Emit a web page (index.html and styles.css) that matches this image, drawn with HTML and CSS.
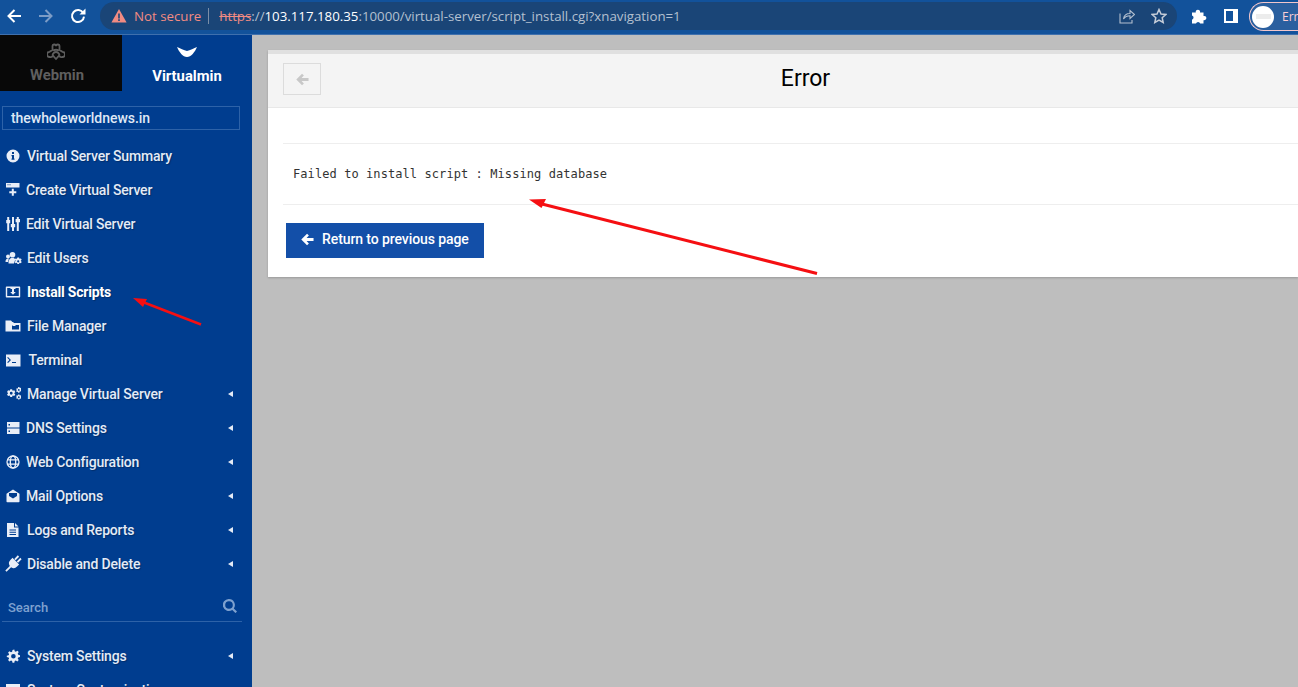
FILE: index.html
```html
<!DOCTYPE html>
<html lang="en">
<head>
<meta charset="utf-8">
<title>Error</title>
<link rel="stylesheet" href="styles.css">
</head>
<body>
<div class="page">
  <header class="chrome">
    <div class="nav-buttons">
      <svg class="nav" viewBox="0 0 16 16"><path d="M15 8H2.500M8.500 2L2.500 8l6 6" fill="none" stroke="#fff" stroke-width="2"/></svg>
      <svg class="nav" viewBox="0 0 16 16"><path d="M1 8h12.500M7.500 2l6 6-6 6" fill="none" stroke="#7c9cc6" stroke-width="2"/></svg>
      <svg class="nav" viewBox="0 0 16 16"><path d="M13.300 5.200A6 6 0 1 0 14 8.600" fill="none" stroke="#fff" stroke-width="2"/><path d="M9.500 6.500h6V.6z" fill="#fff"/></svg>
    </div>
    <div class="omnibox">
      <svg class="warn" viewBox="0 0 16 16"><path d="M8 1l7.600 13.500H.4z" fill="#f28b82"/><path d="M7.200 5.500h1.600v5H7.200zM7.200 11.300h1.600v1.600H7.200z" fill="#1a4577"/></svg>
      <span class="not-secure">Not secure</span>
      <span class="divider"></span>
      <span class="url"><s class="scheme">https</s><span class="dim">://</span><span class="host">103.117.180.35</span><span class="dim">:10000/virtual-server/script_install.cgi?xnavigation=1</span></span>
      <svg class="omni-icon share" viewBox="0 0 16 16"><path d="M1 5.500v9.500h12v-3M4.500 11C5 7.500 7.500 5.500 11 5.500V2.500L15.500 6.500 11 10.500V7.800C8.500 7.800 6 8.800 4.500 11z" fill="none" stroke="#b4c0d0" stroke-width="1.100"/></svg>
      <svg class="omni-icon star" viewBox="0 0 16 16"><path d="M8 1.500l2 4.500 4.800.5-3.600 3.200 1 4.800L8 12.100l-4.200 2.400 1-4.800L1.200 6.500 6 6z" fill="none" stroke="#c6cdd8" stroke-width="1.500"/></svg>
    </div>
    <svg class="ext" viewBox="0 0 16 16"><path d="M1 4.500h3.800a2.200 2.200 0 1 1 4.200 0h3.500V8a2.200 2.200 0 1 1 0 4.200v3.300H9.200a2.200 2.200 0 0 0-4.200 0H1v-3.800a2.200 2.200 0 0 0 0-4.200z" fill="#fff"/></svg>
    <svg class="panel-icon" viewBox="0 0 14 14"><path d="M0 0h14v14H0zM2 2v10h7V2z" fill="#fff" fill-rule="evenodd"/></svg>
    <div class="profile">
      <span class="avatar"><span class="avatar-band"></span></span>
      <span class="profile-text">Error</span>
    </div>
  </header>

  <div class="app">
    <aside class="sidebar">
      <div class="tabs">
        <div class="tab tab-webmin">
          <svg class="tab-icon" viewBox="0 0 18 18"><g fill="none" stroke="#5d5d5d" stroke-width="1.800"><path d="M5.500 7V3.500a1.700 1.700 0 0 1 3.500-.5 1.700 1.700 0 0 1 3.500.5V7l3 1.800a2.600 2.600 0 0 1-.3 5.200c-1.300.4-2.700-.3-3.200-1.300L9 16l-3-3.300c-.5 1-1.900 1.700-3.200 1.300a2.600 2.600 0 0 1-.3-5.200z"/><path d="M6 7.500c2-1 4-1 6 0M5.500 12.500C5.500 10.500 7.500 9 9 9s3.500 1.500 3.500 3.500"/></g></svg>
          <span>Webmin</span>
        </div>
        <div class="tab tab-virtualmin">
          <svg class="tab-icon-v" viewBox="0 0 20 10"><path d="M0 0C3 1 7 3.500 10 4 13 3.500 17 1 20 0 18 5 14 10 10 10 6 10 2 5 0 0z" fill="#fff"/></svg>
          <span>Virtualmin</span>
        </div>
      </div>
      <div class="domain">thewholeworldnews.in</div>
      <nav class="menu">
        <a class="item"><svg class="icon" viewBox="0 0 16 16"><path fill-rule="evenodd" d="M8 1.500a6.500 6.500 0 1 1 0 13 6.500 6.500 0 0 1 0-13zM7 4v2h2V4zM6.500 7v1.200H7v2.300h-.5v1.200h3v-1.200H9V7z"/></svg><span>Virtual Server Summary</span></a>
        <a class="item tight"><svg class="icon" viewBox="0 0 16 16"><path fill-rule="evenodd" d="M1 1h13.500v4.500H1zM2.500 2.200v1h1v-1zM4.500 2.200v1h1v-1zM6.800 6.800h2v2.500h2.500v2H8.800v2.500h-2v-2.500H4.300v-2h2.500z"/></svg><span>Create Virtual Server</span></a>
        <a class="item tight"><svg class="icon" viewBox="0 0 16 16"><path d="M2.200 1h2v3h1v3.200h-1V15h-2V7.200h-1V4h1zM7 1h2v7h1.200v3.200H9V15H7v-3.800H5.800V8H7zM11.800 1h2v2h1.200v3.200h-1.200V15h-2V6.200h-1.200V3h1.200z"/></svg><span>Edit Virtual Server</span></a>
        <a class="item"><svg class="icon over" viewBox="0 0 16 16"><circle cx="7.500" cy="4.800" r="2.800"/><circle cx="3" cy="6.500" r="2"/><path d="M3.500 13.500c0-3.500 1-5.500 4-5.500 1.200 0 2.200.3 2.800 1.200L9 13.500zM.5 12c0-2 .7-3.500 2.800-3.500.3 0 .5 0 .7.100-.5.800-.8 2-.9 3.400z"/><path fill-rule="evenodd" d="M14 7.500l.5 1.300 1.400-.4.800 1.300-1 1.100 1 1.100-.8 1.300-1.400-.4-.5 1.300h-1.600l-.5-1.300-1.400.4-.8-1.300 1-1.100-1-1.100.8-1.300 1.400.4.500-1.300zM13.200 10.200a1.100 1.100 0 1 0 0 2.200 1.100 1.100 0 0 0 0-2.200z"/></svg><span>Edit Users</span></a>
        <a class="item active"><svg class="icon" viewBox="0 0 16 16"><path fill-rule="evenodd" d="M1.500 2.500h13a.7.7 0 0 1 .7.700v9.600a.7.7 0 0 1-.7.700h-13a.7.7 0 0 1-.7-.7V3.200a.7.7 0 0 1 .7-.7zM2.200 4v8h11.600V4h-3.300v1h-5V4zM7 5h2v3h1.800L8 10.800 5.200 8H7z"/></svg><span>Install Scripts</span></a>
        <a class="item"><svg class="icon" viewBox="0 0 16 16"><path fill-rule="evenodd" d="M.5 2.500h5.500l1.300 1.500h1.200v1H15.500v8.500H.5zM7 7v4.500h7V7H11l-1 1H7.800z"/></svg><span>File Manager</span></a>
        <a class="item wide"><svg class="icon" viewBox="0 0 16 16"><path fill-rule="evenodd" d="M1 2.500h14.500v12H1zM3 5l-.8.800L4.500 8 2.200 10.200l.8.800L6 8zM7 10v1h4v-1z"/></svg><span>Terminal</span></a>
        <a class="item sub"><svg class="icon" viewBox="0 0 16 16"><g transform="translate(.8 -1.200) scale(1.130)"><path fill-rule="evenodd" d="M5.500 4l.6 1.300 1.400-.4.900 1.400-1 1.100 1 1.100-.9 1.400-1.400-.4-.6 1.300H4l-.6-1.300-1.400.4-.9-1.400 1-1.100-1-1.100.9-1.400 1.400.4L4 4zM4.800 6.200a1.200 1.200 0 1 0 0 2.500 1.200 1.200 0 0 0 0-2.500zM12 2l.4.9 1-.2.500.9-.6.700.6.700-.5.900-1-.2L12 7h-1l-.3-.9-1 .2-.5-.9.6-.7-.6-.7.5-.9 1 .2L11 2zM11.500 3.700a.8.8 0 1 0 0 1.600.8.800 0 0 0 0-1.600zM12 8.500l.4.900 1-.2.500.9-.6.700.6.700-.5.900-1-.2-.4.900h-1l-.3-.9-1 .2-.5-.9.6-.7-.6-.7.5-.9 1 .2.300-.9zM11.500 10.200a.8.8 0 1 0 0 1.600.8.800 0 0 0 0-1.600z"/></g></svg><span>Manage Virtual Server</span><i class="caret"></i></a>
        <a class="item sub tight"><svg class="icon" viewBox="0 0 16 16"><path fill-rule="evenodd" d="M2 2h12.500v5.500H2zM2 8.500h12.500V14H2zM3.500 4v1.500H5V4zM3.500 10.500V12H5v-1.500z"/></svg><span>DNS Settings</span><i class="caret"></i></a>
        <a class="item sub tight"><svg class="icon" viewBox="0 0 16 16"><g fill="none" stroke="#e9eef7" stroke-width="1.300"><circle cx="8" cy="8" r="6"/><ellipse cx="8" cy="8" rx="2.700" ry="6"/><path d="M2.200 5.800h11.600M2.200 10.200h11.600"/></g></svg><span>Web Configuration</span><i class="caret"></i></a>
        <a class="item sub tight"><svg class="icon" viewBox="0 0 16 16"><path fill-rule="evenodd" d="M8 1.500l6.500 4.300v7.700a.8.8 0 0 1-.8.800H2.300a.8.8 0 0 1-.8-.8V5.800zM4 5v2.900l4 2.600 4-2.600V5z"/></svg><span>Mail Options</span><i class="caret"></i></a>
        <a class="item sub"><svg class="icon" viewBox="0 0 16 16"><path fill-rule="evenodd" d="M2 1h7v4.500h4.500V15H2zM10 1l3.500 3.500H10zM4.500 7.500v1h6.500v-1zM4.500 9.800v1h6.500v-1zM4.500 12v1h6.500v-1z"/></svg><span>Logs and Reports</span><i class="caret"></i></a>
        <a class="item sub"><svg class="icon over" viewBox="0 0 16 16"><g transform="rotate(45 8 8)"><path d="M5.300-1.500h1.900v5H5.300zM8.800-1.500h1.900v5H8.800zM3.300 4h9.400v3a4.700 4.700 0 0 1-3.800 4.600V18H7.100v-6.400A4.700 4.700 0 0 1 3.300 7z"/></g></svg><span>Disable and Delete</span><i class="caret"></i></a>
      </nav>
      <div class="search">
        <span>Search</span>
        <svg class="search-icon" viewBox="0 0 14 14"><path d="M6 0a6 6 0 0 1 4.800 9.400l3.200 3.200-1.500 1.500L9.300 10.900A6 6 0 1 1 6 0zm0 2.200a3.800 3.800 0 1 0 0 7.600 3.800 3.800 0 0 0 0-7.600z" fill="#7ea1cf"/></svg>
      </div>
      <nav class="menu menu-lower">
        <a class="item sub"><svg class="icon" viewBox="0 0 16 16"><path fill-rule="evenodd" d="M9.300 1.500l.4 1.800 1.100.5 1.600-1 1.300 1.300-1 1.600.5 1.100 1.800.4v1.800l-1.800.4-.5 1.100 1 1.600-1.300 1.300-1.600-1-1.100.5-.4 1.800H7.500l-.4-1.800-1.100-.5-1.600 1-1.300-1.300 1-1.600-.5-1.100-1.800-.4V7.700l1.800-.4.500-1.100-1-1.600 1.300-1.300 1.600 1 1.100-.5.400-1.800zM8.400 6a2.300 2.300 0 1 0 0 4.600 2.300 2.300 0 0 0 0-4.600z"/></svg><span>System Settings</span><i class="caret"></i></a>
        <a class="item sub"><svg class="icon" viewBox="0 0 16 16"><path d="M1 2h14v12H1z"/></svg><span>System Customization</span><i class="caret"></i></a>
      </nav>
    </aside>

    <main class="content">
      <section class="card">
        <div class="card-head">
          <button class="back-btn"><svg class="back-icon" viewBox="0 0 14 14"><path d="M6.500.8l2 2L6 5.300h7.500v3.400H6l2.500 2.500-2 2L.3 7z" fill="#c8c8c8"/></svg></button>
          <h1>Error</h1>
        </div>
        <div class="card-body">
          <div class="rule-top"></div>
          <p class="message">Failed to install script : Missing database</p>
          <div class="actions">
            <button class="return-btn"><svg class="return-icon" viewBox="0 0 14 14"><path d="M6.500.8l2 2L6 5.300h7.500v3.400H6l2.500 2.500-2 2L.3 7z" fill="#fff"/></svg>Return to previous page</button>
          </div>
        </div>
      </section>
    </main>
  </div>

  <svg class="annotations" viewBox="0 0 1298 687">
    <path d="M817 273.500L540 203.500" stroke="#f50f12" stroke-width="3" fill="none"/>
    <path d="M529 199.500L546 199 541.500 208z" fill="#f50f12"/>
    <path d="M201 324.500L144 302.500" stroke="#f50f12" stroke-width="2.500" fill="none"/>
    <path d="M133 298L147 299 143 307z" fill="#f50f12"/>
  </svg>
</div>
</body>
</html>
```
FILE: styles.css
```css
* { box-sizing: border-box; }
html, body { margin: 0; padding: 0; height: 100%; }
body { font-family: Roboto, "Liberation Sans", sans-serif; overflow: hidden; background: #bebebe; }
.page { position: relative; width: 1298px; height: 687px; overflow: hidden; display: flex; flex-direction: column; }

/* browser chrome */
.chrome { height: 35px; flex: none; display: flex; align-items: flex-start; background: #12529b; border-bottom: 1px solid #3f70ad; }
.nav-buttons { display: flex; gap: 16px; padding: 8px 0 0 6px; width: 100px; flex: none; }
.nav { width: 16px; height: 16px; flex: none; }
.omnibox { width: 1077px; height: 28px; margin-top: 2px; flex: none; border-radius: 14px; background: #1a4577; display: flex; align-items: center; padding-left: 11px; font-family: "Open Sans", "Noto Sans", sans-serif; font-size: 13.27px; }
.warn { width: 16px; height: 16px; flex: none; }
.not-secure { color: #f28b82; margin-left: 7px; }
.divider { width: 1px; height: 16px; background: #7a8ea8; margin: 0 10px 0 7px; }
.url { flex: 1; white-space: nowrap; color: #fff; }
.scheme { color: #f28b82; }
.dim { color: #b4c0d0; }
.host { color: #fff; }
.omni-icon { width: 16px; height: 16px; flex: none; }
.share { margin-right: 16px; }
.star { margin-right: 10px; }
.ext { width: 16px; height: 16px; flex: none; margin: 8px 0 0 14px; }
.panel-icon { width: 14px; height: 14px; flex: none; margin: 9px 0 0 17px; }
.profile { flex: none; width: 60px; height: 29px; margin: 2px 0 0 11px; border: 1px solid #f2c6cb; border-right: 0; border-radius: 15px 0 0 15px; display: flex; align-items: center; padding-left: 2px; background: #2a5f9f; }
.avatar { width: 22px; height: 22px; border-radius: 50%; background: #fff; display: flex; align-items: center; justify-content: center; flex: none; }
.avatar-band { width: 15px; height: 5px; background: #ececec; }
.profile-text { color: #fbd0d5; font: 12px "Open Sans", sans-serif; margin-left: 8px; }

/* app */
.app { flex: 1; display: flex; min-height: 0; }
.sidebar { width: 252px; flex: none; background: #003d8f; overflow: hidden; }
.tabs { display: flex; height: 56px; }
.tab { display: flex; flex-direction: column; align-items: center; font-size: 14.8px; font-weight: 700; }
.tab-webmin { width: 122px; background: #080808; color: #5f5f5f; padding: 8px 8px 0 0; }
.tab-webmin .tab-icon { margin-right: 3px; }
.tab-virtualmin { width: 130px; color: #fff; padding: 12px 0 0; }
.tab-icon { width: 18px; height: 18px; display: block; margin-bottom: 5px; }
.tab-icon-v { width: 20px; height: 10px; display: block; margin-bottom: 10px; }
.domain { margin: 15px 12px 0 2px; height: 24px; border: 1px solid #2d62a8; color: #dfe8f5; font-size: 14px; letter-spacing: -.05px; font-weight: 500; line-height: 22px; padding-left: 8px; }
.menu { margin-top: 9px; display: flex; flex-direction: column; }
.item { height: 34px; display: flex; align-items: center; padding: 0 20px 0 5px; color: #e4ebf6; font-size: 14px; letter-spacing: -.18px; font-weight: 500; text-shadow: 1px 1px 1px rgba(0, 0, 0, .25); white-space: nowrap; }
.item span { margin-left: 6px; }
.item.tight span { margin-left: 5px; }
.item.wide span { margin-left: 7.5px; }
.item.active { color: #fff; font-weight: 700; }
.icon { width: 16px; height: 16px; flex: none; fill: #e9eef7; }
.icon.over { overflow: visible; }
.caret { margin-left: auto; width: 0; height: 0; border-style: solid; border-width: 3.5px 5px 3.5px 0; border-color: transparent #e4ebf6 transparent transparent; margin-right: -1px; }
.search { margin: 9px 10px 0 2px; height: 32px; border-bottom: 1px solid #2d62a8; display: flex; align-items: center; justify-content: space-between; padding: 3px 5px 0 6px; color: #7ea1cf; font-size: 13px; font-weight: 500; }
.search-icon { width: 14px; height: 14px; flex: none; margin-top: -2px; }
.menu-lower { margin-top: 17px; }

/* content */
.content { flex: 1; min-width: 0; padding: 15px 0 0 16px; }
.card { background: #fff; border-top: 4px solid #e0e0e0; box-shadow: 0 1px 2px rgba(0, 0, 0, .2); height: 227px; display: flex; flex-direction: column; }
.card-head { height: 54px; flex: none; background: #f4f4f4; border-bottom: 1px solid #e8e8e8; display: flex; align-items: flex-start; padding: 9px 0 0 15px; }
.back-btn { width: 38px; height: 32px; border: 1px solid #dcdcdc; background: #f4f4f4; padding: 0; display: flex; align-items: center; justify-content: center; flex: none; }
.back-icon { width: 13px; height: 13px; }
.card-head h1 { flex: 1; margin: 0 -30px 0 -38px; padding-top: 1px; font-family: Roboto, sans-serif; font-size: 23px; font-weight: 400; line-height: 30px; text-align: center; color: #000; }
.card-body { flex: 1; padding: 35px 0 0 15px; }
.rule-top { height: 1px; background: #eeeeee; }
.message { margin: 0; height: 61px; padding: 23px 0 0 10px; font-family: "DejaVu Sans Mono", "Liberation Mono", monospace; font-size: 12px; letter-spacing: .08px; line-height: 15px; color: #333; border-bottom: 1px solid #eeeeee; }
.actions { padding: 18px 0 0 3px; }
.return-btn { width: 198px; height: 35px; border: 0; background: #134fa8; color: #fff; font-family: Roboto, sans-serif; font-size: 14px; letter-spacing: -.09px; font-weight: 500; display: flex; align-items: center; padding: 0 0 3px 15px; }
.return-icon { width: 13px; height: 13px; margin-right: 8px; flex: none; }

.annotations { position: absolute; left: 0; top: 0; width: 1298px; height: 687px; pointer-events: none; }
```
